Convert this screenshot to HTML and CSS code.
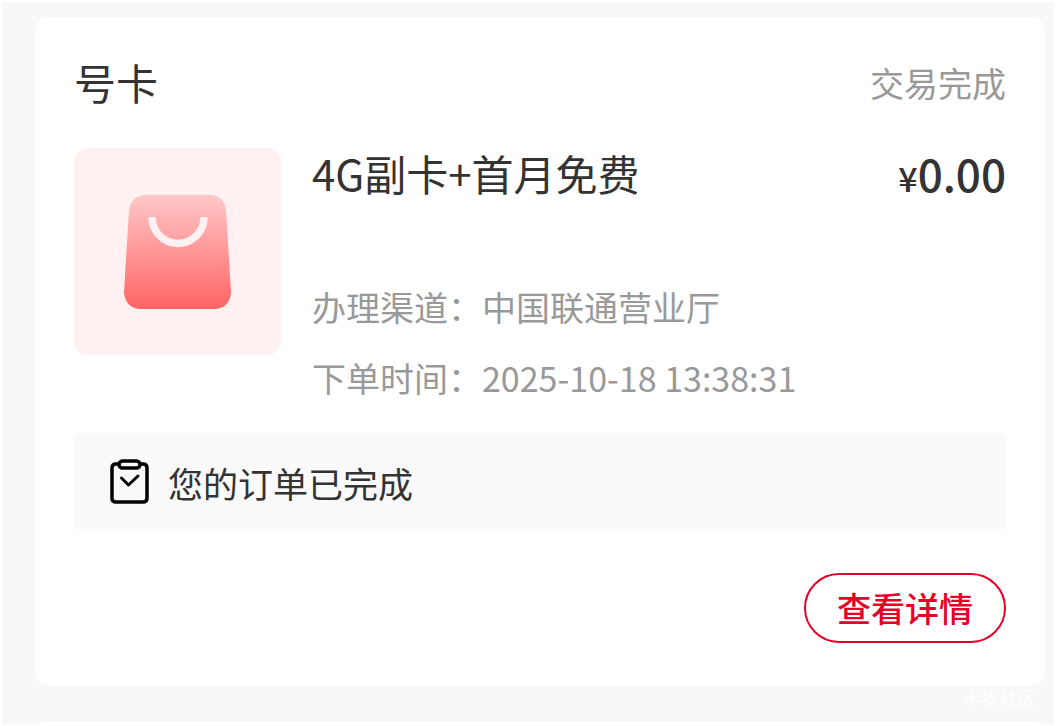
FILE: index.html
```html
<!DOCTYPE html>
<html lang="zh-CN">

<head>
    <meta charset="UTF-8">
    <meta name="viewport" content="width=device-width, initial-scale=1.0">
    <title>号卡</title>
    <link rel="stylesheet" href="styles.css">
</head>

<body>
    <main class="order-list">
        <article class="order-card">
            <header class="order-header">
                <h2 class="order-type">号卡</h2>
                <span class="order-status">交易完成</span>
            </header>

            <div class="order-body">
                <div class="thumb">
                    <svg class="bag-icon" viewBox="0 0 108 114" aria-hidden="true">
                        <defs>
                            <linearGradient id="bagFill" x1="0" y1="0" x2="0" y2="1">
                                <stop offset="0" stop-color="#ffc8c8" />
                                <stop offset="1" stop-color="#ff6464" />
                            </linearGradient>
                        </defs>
                        <path fill="url(#bagFill)" d="M21 0H87Q100 1 102 15L107 97Q106 112 92 114H15Q1 112 0 97L5 15Q7 1 21 0Z" />
                        <path fill="none" stroke="#fff0f1" stroke-width="7.500" d="M28 22A26 26.500 0 0 0 80 22" />
                    </svg>
                </div>

                <div class="order-info">
                    <div class="product">
                        <h3 class="product-name">4G副卡+首月免费</h3>
                        <span class="price"><span class="currency">¥</span>0.00</span>
                    </div>
                    <div class="details">
                        <p>办理渠道：中国联通营业厅</p>
                        <p>下单时间：2025-10-18 13:38:31</p>
                    </div>
                </div>
            </div>

            <div class="notice">
                <svg class="clipboard-icon" viewBox="0 0 40 46" aria-hidden="true">
                    <g fill="none" stroke="#000" stroke-width="3.500" stroke-linecap="round" stroke-linejoin="round">
                        <path d="M9 5H7Q3 5 3 9V39Q3 43 7 43H34Q38 43 38 39V9Q38 5 34 5H32" />
                        <rect x="10" y="2" width="21" height="7" rx="3.500" />
                        <path d="M12.500 19L19.500 26L29 17" stroke-width="3" />
                    </g>
                </svg>
                <span>您的订单已完成</span>
            </div>

            <footer class="actions">
                <button type="button" class="detail-btn">查看详情</button>
            </footer>
        </article>

        <article class="order-card next-card"></article>
    </main>
    <span class="watermark">卡农社区</span>
</body>

</html>
```
FILE: styles.css
```css
* {
    box-sizing: border-box;
}

body {
    position: relative;
    height: 100vh;
    margin: 0;
    border: 2px solid #fff;
    overflow: hidden;
    background-color: #f8f8f8;
    color: #333;
    font-family: "Noto Sans CJK SC", sans-serif;
}

h2,
h3,
p {
    margin: 0;
    font-weight: normal;
}

.order-list {
    display: flex;
    flex-direction: column;
    gap: 35px;
    padding: 15px 9px 0 33px;
}

.order-card {
    padding: 40px 39px 43px;
    border-radius: 14px;
    background: #fff;
}

.next-card {
    min-height: 83px;
}

.order-header,
.product {
    display: flex;
    align-items: center;
    justify-content: space-between;
    height: 50px;
}

.order-header {
    margin-bottom: 41px;
}

.order-type,
.product-name {
    font-size: 42px;
    line-height: 50px;
}

.order-status {
    color: #999;
    font-size: 34px;
}

.order-body {
    display: flex;
    gap: 31px;
}

.thumb {
    display: flex;
    flex: none;
    align-items: center;
    justify-content: center;
    width: 207px;
    height: 207px;
    border-radius: 14px;
    background: #fff0f1;
}

.bag-icon {
    width: 108px;
    height: 114px;
}

.order-info {
    flex: 1;
}

.price {
    font-size: 44px;
    font-weight: 500;
    line-height: 50px;
}

.currency {
    font-size: 34px;
    line-height: 1;
}

.details {
    margin-top: 73px;
    color: #999;
    font-size: 34px;
    line-height: 71px;
}

.notice {
    display: flex;
    align-items: center;
    gap: 19px;
    height: 98px;
    margin-top: 20px;
    padding: 0 35px;
    border-radius: 8px;
    background: #f9f9f9;
    font-size: 35px;
}

.clipboard-icon {
    width: 40px;
    height: 46px;
}

.actions {
    display: flex;
    justify-content: flex-end;
    margin-top: 42px;
}

.detail-btn {
    height: 70px;
    padding: 0 31px;
    border: 2px solid #e60027;
    border-radius: 35px;
    background: #fff;
    color: #e60027;
    font-family: inherit;
    font-size: 34px;
    font-weight: 500;
    line-height: 1;
    cursor: pointer;
}

/* sits over the gap between cards */
.watermark {
    position: absolute;
    right: 18px;
    bottom: 14px;
    color: #fff;
    font-size: 18px;
    line-height: 26px;
}
```
